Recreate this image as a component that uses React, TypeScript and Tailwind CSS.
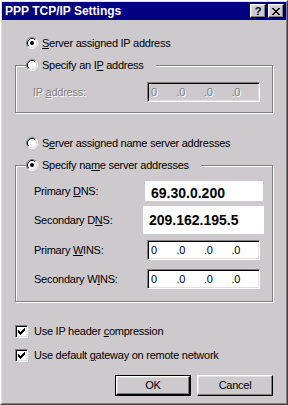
import React from "react";

const face = "bg-[#cdc9cd]";
const sunken =
  "border border-t-[#808080] border-l-[#808080] border-r-white border-b-white shadow-[inset_1px_1px_0_#000,inset_-1px_-1px_0_#dfdfdf]";
const raised =
  "border border-t-white border-l-white border-r-black border-b-black shadow-[inset_-1px_-1px_0_#808080,inset_1px_1px_0_#dfdfdf]";
const disabledText = "text-[#808080] [text-shadow:1px_1px_0_#fff]";

const Radio = ({ checked }: { checked?: boolean }) => (
  <svg width="12" height="12" viewBox="0 0 12 12" className="shrink-0">
    <circle cx="6" cy="6" r="4.5" fill="#fff" />
    <path d="M2.11 9.89A5.5 5.5 0 0 1 9.89 2.11" fill="none" stroke="#808080" />
    <path d="M9.89 2.11A5.5 5.5 0 0 1 2.11 9.89" fill="none" stroke="#fff" />
    <path d="M2.82 9.18A4.5 4.5 0 0 1 9.18 2.82" fill="none" stroke="#000" />
    <path d="M9.18 2.82A4.5 4.5 0 0 1 2.82 9.18" fill="none" stroke="#dfdfdf" />
    {checked && <circle cx="6" cy="6" r="2" fill="#000" />}
  </svg>
);

const checkCols = [2, 3, 4, 3, 2, 1, 0];

const Checkbox = () => (
  <div className={`w-[13px] h-[13px] shrink-0 bg-white flex items-center justify-center ${sunken}`}>
    <svg width="7" height="7" viewBox="0 0 7 7">
      {checkCols.map((y, x) => (
        <rect key={x} x={x} y={y} width="1" height="3" fill="#000" />
      ))}
    </svg>
  </div>
);

const closeRows = [
  [0, 1, 6, 7],
  [1, 2, 5, 6],
  [2, 3, 4, 5],
  [3, 4],
  [2, 3, 4, 5],
  [1, 2, 5, 6],
  [0, 1, 6, 7],
];

const IpBox = ({ disabled }: { disabled?: boolean }) => (
  <div className={`w-[113px] h-[20px] flex items-center pl-[1px] ${sunken} ${disabled ? face : "bg-white"}`}>
    {["0", ".0", ".0", ".0"].map((s, i) => (
      <span key={i} className={`w-[28px] ${i === 0 ? "pl-[2px]" : ""} ${disabled ? disabledText : "text-black"}`}>
        {s}
      </span>
    ))}
  </div>
);

export default function App() {
  return (
    <div
      className={`w-[288px] h-[405px] ${face} border border-t-white border-l-white border-r-[#404040] border-b-[#404040] text-[11px] tracking-[-0.25px] text-black select-none`}
      style={{ fontFamily: '"Liberation Sans", Arial, sans-serif' }}
    >
      <div className="h-full border border-t-[#dfdfdf] border-l-[#dfdfdf] border-r-[#808080] border-b-[#808080] flex flex-col">
        {/* title bar */}
        <div className="h-[18px] shrink-0 bg-[#000080] flex items-center pl-[3px] pr-[2px]">
          <span className="text-white font-bold text-[12px] tracking-normal">PPP TCP/IP Settings</span>
          <div className="ml-auto flex gap-[2px]">
            <div className={`w-[16px] h-[14px] ${face} ${raised} flex items-center justify-center text-[11px] font-bold leading-none`}>
              ?
            </div>
            <div className={`w-[16px] h-[14px] ${face} ${raised} flex items-center justify-center`}>
              <svg width="8" height="7" viewBox="0 0 8 7">
                {closeRows.map((cols, y) =>
                  cols.map((x) => <rect key={`${x}-${y}`} x={x} y={y} width="1" height="1" fill="#000" />)
                )}
              </svg>
            </div>
          </div>
        </div>

        {/* body */}
        <div className="flex items-center h-3 mt-[17px] ml-[24px] gap-[4px]">
          <Radio checked />
          <span>
            <u>S</u>erver assigned IP address
          </span>
        </div>

        <fieldset className="mt-[10px] ml-[13px] w-[258px] border border-[#808080] shadow-[1px_1px_0_#fff,inset_1px_1px_0_#fff] pb-[10px]">
          <legend className={`ml-[10px] pr-[12px] ${face}`}>
            <span className="flex items-center h-3 gap-[4px]">
              <Radio />
              <span>
                Specify an I<u>P</u> address
              </span>
            </span>
          </legend>
          <div className="flex items-center mt-[11px] pl-[17px]">
            <span className={`w-[114px] ${disabledText}`}>
              IP <u>a</u>ddress:
            </span>
            <IpBox disabled />
          </div>
        </fieldset>

        <div className="flex items-center h-3 mt-[24px] ml-[24px] gap-[4px]">
          <Radio />
          <span>
            S<u>e</u>rver assigned name server addresses
          </span>
        </div>

        <fieldset className="mt-[10px] ml-[13px] w-[258px] border border-[#808080] shadow-[1px_1px_0_#fff,inset_1px_1px_0_#fff] pb-[12px]">
          <legend className={`ml-[10px] pr-[12px] ${face}`}>
            <span className="flex items-center h-3 gap-[4px]">
              <Radio checked />
              <span>
                Specify na<u>m</u>e server addresses
              </span>
            </span>
          </legend>
          <div className="flex items-center mt-[10px] pl-[18px]">
            <span className="w-[111px]">
              Primary <u>D</u>NS:
            </span>
            <div className="w-[118px] h-[20px] bg-white flex items-end pl-[6px] pb-[1px] text-[14px] font-bold leading-none tracking-normal">
              69.30.0.200
            </div>
          </div>
          <div className="flex items-center mt-[5px] pl-[18px]">
            <span className="w-[109px]">
              Secondary D<u>N</u>S:
            </span>
            <div className="w-[121px] h-[28px] bg-white flex items-center pl-[6px] text-[14px] font-bold leading-none tracking-normal">
              209.162.195.5
            </div>
          </div>
          <div className="flex items-center mt-[6px] pl-[18px]">
            <span className="w-[113px]">
              Primary <u>W</u>INS:
            </span>
            <IpBox />
          </div>
          <div className="flex items-center mt-[9px] pl-[18px]">
            <span className="w-[113px]">
              Secondary W<u>I</u>NS:
            </span>
            <IpBox />
          </div>
        </fieldset>

        <div className="flex items-center h-[13px] mt-[23px] ml-[13px] gap-[6px]">
          <Checkbox />
          <span>
            Use IP header <u>c</u>ompression
          </span>
        </div>
        <div className="flex items-center h-[13px] mt-[11px] ml-[13px] gap-[6px]">
          <Checkbox />
          <span>
            Use default <u>g</u>ateway on remote network
          </span>
        </div>

        <div className="flex justify-end gap-[6px] mt-[13px] pr-[13px]">
          <div className="w-[76px] h-[21px] border border-black">
            <div className={`h-full ${raised} flex items-center justify-center`}>OK</div>
          </div>
          <div className={`w-[76px] h-[21px] ${raised} flex items-center justify-center`}>Cancel</div>
        </div>
      </div>
    </div>
  );
}
